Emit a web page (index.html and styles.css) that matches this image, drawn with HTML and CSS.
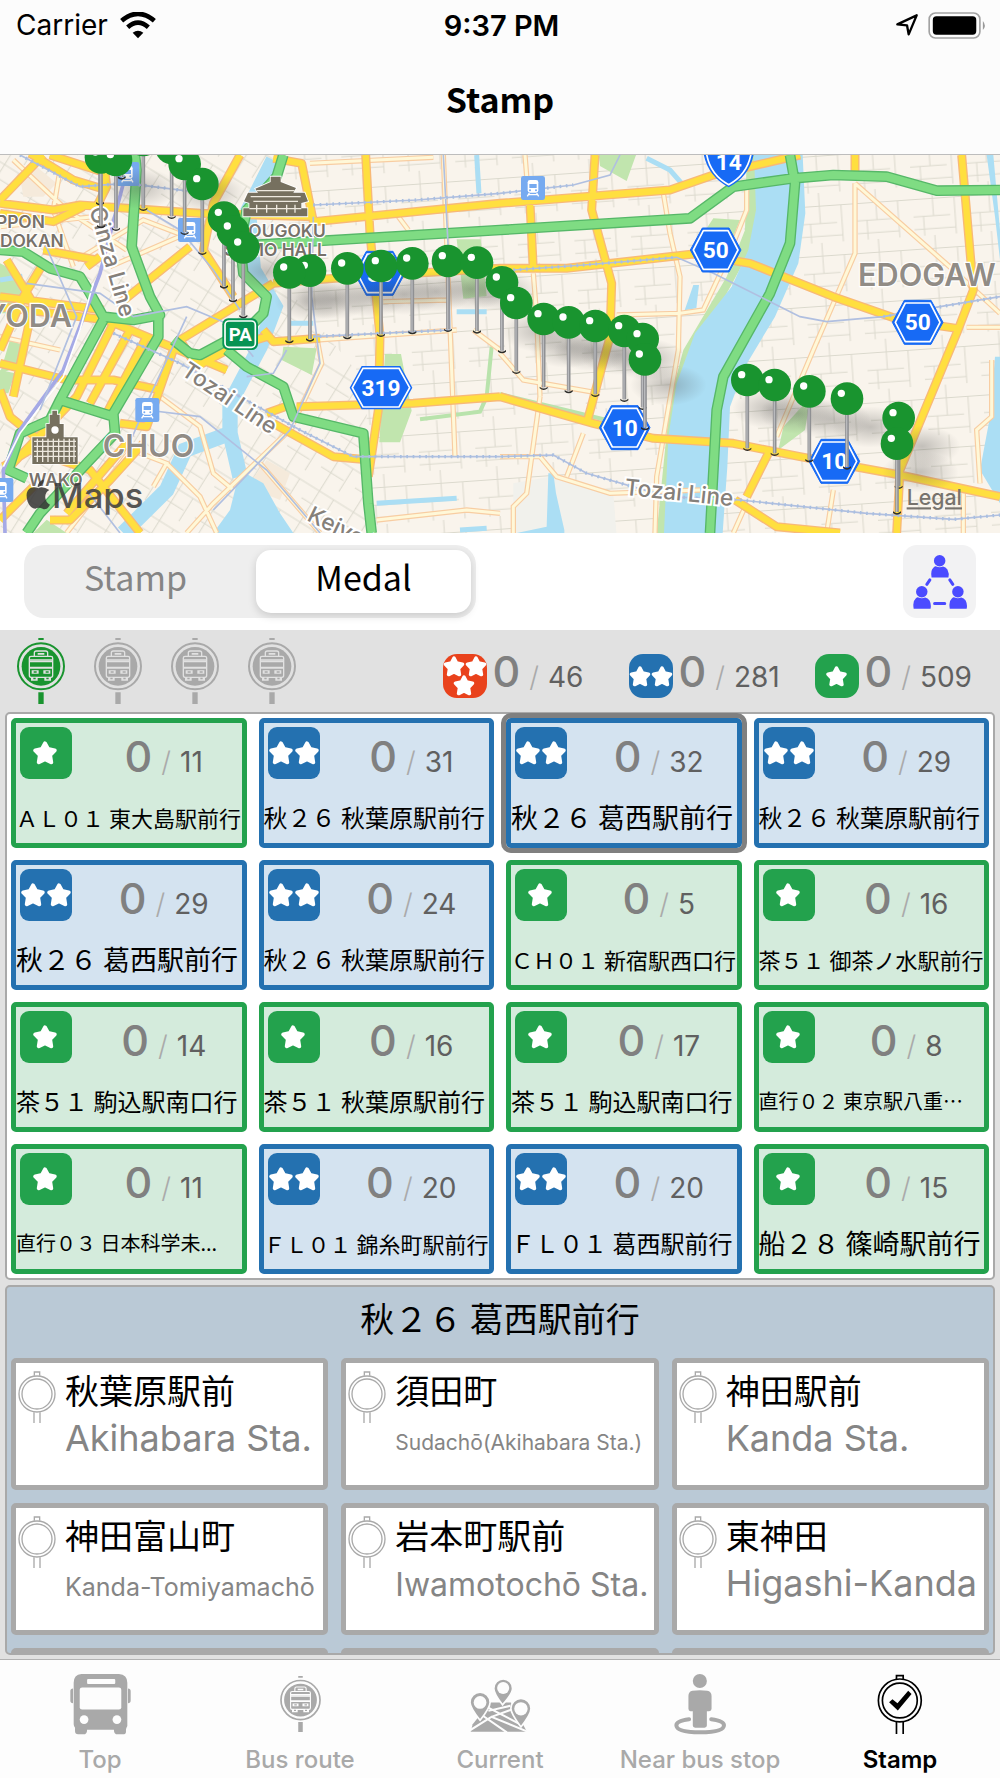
FILE: index.html
```html
<!DOCTYPE html>
<html lang="ja">
<head>
<meta charset="utf-8">
<meta name="viewport" content="width=device-width, initial-scale=1">
<title>Stamp</title>
<link rel="stylesheet" href="styles.css">
</head>
<body>
<svg class="defs" aria-hidden="true">
  <symbol id="star" viewBox="0 0 24 24"><path d="M12 2.4 15 8 21.7 9.4 17.1 14.2 18.2 21.2 12 18.2 5.8 21.2 6.9 14.2 2.3 9.4 9 8Z" fill="#fff" stroke="#fff" stroke-width="4" stroke-linejoin="round"/></symbol>
  <symbol id="one" viewBox="0 0 52 52"><rect width="52" height="52" rx="9" fill="#23a24d"/><use href="#star" x="13" y="14" width="24" height="24"/></symbol>
  <symbol id="two" viewBox="0 0 52 52"><rect width="52" height="52" rx="9" fill="#2471b0"/><use href="#star" x="1" y="14" width="24" height="24"/><use href="#star" x="27" y="14" width="24" height="24"/></symbol>
  <symbol id="sum1" viewBox="0 0 44 44"><rect width="44" height="44" rx="14" fill="#23a24d"/><use href="#star" x="11" y="12" width="21" height="21"/></symbol>
  <symbol id="sum2" viewBox="0 0 44 44"><rect width="44" height="44" rx="14" fill="#2471b0"/><use href="#star" x="0" y="12" width="22" height="21"/><use href="#star" x="22" y="12" width="22" height="21"/></symbol>
  <symbol id="sum3" viewBox="0 0 44 44"><rect width="44" height="44" rx="14" fill="#e9421c"/><use href="#star" x="0" y="2" width="22" height="21"/><use href="#star" x="22" y="2" width="22" height="21"/><use href="#star" x="10" y="21" width="22" height="21"/></symbol>
  <symbol id="sign" viewBox="0 0 144 198">
    <path d="M64 0h16v6h-16zM64 163h16v35h-16z" fill="currentColor"/>
    <circle cx="72" cy="85" r="69" fill="none" stroke="currentColor" stroke-width="6"/>
    <circle cx="72" cy="85" r="58" fill="currentColor"/>
    <g fill="none" stroke="var(--cut)" stroke-width="4"><path d="M52 54v-9q0-6 6-6h28q6 0 6 6v9M42 55h60q5 0 5 5v52q0 6-5 6H42q-5 0-5-6V60q0-5 5-5ZM39 66h66M39 90h66"/></g>
    <path d="M62 45h20v5H62zM38 68h68v5H38zM38 86h68v4H38z" fill="var(--cut)"/>
    <path d="M44 97h21v10H44zM79 97h21v10H79zM42 119h20v9H42zM82 119h20v9H82z" fill="var(--cut)"/>
    <path d="M50 100h9v4h-9zM86 100h9v4h-9zM49 119h7v5h-7zM88 119h7v5h-7z" fill="currentColor"/>
  </symbol>
  <symbol id="stop" viewBox="0 0 112 156">
    <g fill="none" stroke="currentColor"><circle cx="56" cy="69" r="54" stroke-width="4"/><circle cx="56" cy="69" r="45" stroke-width="4"/><path d="M48 14V3h16v11M47 124v32M65 124v32" stroke-width="4"/></g>
  </symbol>
  <g id="pin"><path d="M0 40V205" stroke="#8f9093" stroke-width="11"/><path d="M-1 40V205" stroke="#b9babd" stroke-width="4"/><path d="M-12 203q12 11 24 0v5q-12 10-24 0Z" fill="#2c2c2a"/><circle r="49" fill="#19942f"/><circle cx="-17" cy="-16" r="11" fill="#fff"/></g>
  <g id="train"><rect width="72" height="72" rx="7" fill="#76aaf0"/><rect x="20" y="12" width="32" height="38" rx="7" fill="#fff"/><path d="M25 24h22v12H25z" fill="#76aaf0"/><circle cx="27" cy="43" r="3" fill="#76aaf0"/><circle cx="45" cy="43" r="3" fill="#76aaf0"/><path d="m25 51-6 10M47 51l6 10M23 56h26" stroke="#fff" stroke-width="4"/></g>
  <g id="hex"><path d="M-40-66H40L76 0 40 66H-40L-76 0Z" fill="#176af5" stroke="#176af5" stroke-width="3" stroke-linejoin="round"/><path d="M-37-58H37L67 0 37 58H-37L-67 0Z" fill="#176af5" stroke="#fff" stroke-width="5" stroke-linejoin="round"/></g>
</svg>

<div class="app">
  <header class="top">
    <div class="status">
      <span class="carrier">Carrier
        <svg class="wifi" viewBox="0 0 108 80" aria-hidden="true"><path d="M5 26Q54-16 103 26M23 45Q54 18 85 45" fill="none" stroke="#000" stroke-width="14"/><path d="M38 62Q54 50 70 62L54 78Z"/></svg>
      </span>
      <time class="clock">9:37 PM</time>
      <span class="indicators">
        <svg class="arrow" viewBox="0 0 66 66" aria-hidden="true"><path d="M4 31 62 4 38 61 33 34Z" fill="none" stroke="#000" stroke-width="7" stroke-linejoin="round"/></svg>
        <svg class="battery" viewBox="0 0 176 82" aria-hidden="true"><rect x="2" y="3" width="154" height="76" rx="19" fill="none" stroke="#a2a2a2" stroke-width="5"/><rect x="13" y="13" width="132" height="56" rx="11"/><path d="M165 27q12 14 0 28z" fill="#999"/></svg>
      </span>
    </div>
    <h1>Stamp</h1>
  </header>

  <svg class="map" viewBox="0 15 3000 1134" preserveAspectRatio="xMidYMid slice" role="img" aria-label="Map">
    <defs>
      <pattern id="st1" width="170" height="150" patternUnits="userSpaceOnUse" patternTransform="rotate(-4)"><path d="M0 40H170M0 92H110M60 0V92M125 40V150M0 130H125M30 92V150" fill="none" stroke="#dbd9cd" stroke-width="3"/></pattern>
      <pattern id="st2" width="120" height="110" patternUnits="userSpaceOnUse" patternTransform="rotate(32)"><path d="M0 30H120M0 75H80M35 0V110M85 30V110" fill="none" stroke="#dbd9cd" stroke-width="3"/></pattern>
      <radialGradient id="shade"><stop offset="0" stop-color="#444" stop-opacity=".3"/><stop offset="1" stop-color="#444" stop-opacity="0"/></radialGradient>
      <ellipse id="sh" cx="70" cy="85" rx="115" ry="62" fill="url(#shade)"/>
    </defs>
    <rect width="3000" height="1160" fill="#f9f4ec"/>
    <path d="M850 0H3000V1160H1100V700L850 400Z" fill="url(#st1)"/>
    <path d="M0 0H850V400L1100 700V1160H0Z" fill="url(#st2)"/>
    <path d="M1650 980 1840 1030 1850 1160H1540V1000Z" fill="#f1f1ec"/>
    <g fill="#f5eadb"><path d="m60 80 50-30 60 50-40 40H70ZM800 930l70 40-30 80-100-40Z"/></g>
    <g fill="#c1e5ae">
      <path d="M0 340 60 370 75 440 50 490H0ZM30 570l50 20-20 60-60 20ZM0 660l45 10-20 60H0ZM850 590l100 5-15 80-90-45ZM1155 612h48l32 170-35 95h-62ZM1370 268h72l18 170-70 8ZM1796 15h112l-28 78-80-45ZM2140 205l80 5-20 50-90-10ZM2350 830l60-65 15 15-10 60-80 60ZM100 1149l40-40 60 40Z"/>
      <path d="M2240 15h40V200L2240 320 2120 540 2035 700 2010 1149H1970L2010 750 2050 600 2180 380 2235 240Z"/>
    </g>
    <path d="M1260 808 1440 785 1460 740 1475 590M1500 732 1820 810" fill="none" stroke="#b9e3ac" stroke-width="12"/>
    <g fill="#abdef4">
      <path d="M2262 15H2408L2416 190 2395 340 2325 500 2235 650 2190 770 2182 950 2168 1149H1992L2005 860 2030 700 2085 550 2195 410 2245 300 2268 180Z"/>
      <path d="M2960 15h20L3000 240V330L2985 200ZM2985 620H3000V1060L2940 960 2970 800ZM720 960 790 1000 840 1090 880 1149H640L690 1080ZM1645 970h15l8 60 25 110V1149H1550L1640 1130ZM2080 405h17l-8 70-35 6Z"/>
    </g>
    <g fill="none" stroke="#abdef4"><path d="M820 30 745 180 760 360 825 470 780 590 690 760 690 850 720 980" stroke-width="46"/><path d="M690 850 555 900 500 1020 370 1149" stroke-width="46"/><path d="M870 520H940M1370 485H1460M1130 1060 1370 1045M1940 25 2010 60 2045 100M1430 15 1437 130M1380 1140 1460 1135M0 390 60 380 70 440" stroke-width="15"/></g>

    <path d="M40 30 200 180 380 300M180 60l-20 120 60 170M0 230 280 200M230 330 430 210 560 260M330 350 560 250M0 560 180 600M930 40 1300 22M1330 15 1345 400 1365 920M1150 455 1345 450M1195 200 1225 240M1575 15 1585 140M1600 370 1610 500 1620 740M1850 495 2040 490 2110 480 2180 330 2240 180V100M1990 130 2010 250 2040 380 2035 600 1970 980 1965 1149M2565 100V310L2440 600 2330 860M2565 100 2860 360 3000 490M2900 532H3000M2975 630V800L2930 840 2940 1000M1500 610 1570 690 1800 730M1500 920H1620L1670 980 1830 1030 2100 1020M1620 740 1580 1030 1540 1070V1149M1750 850 1700 980M880 830 640 1060 560 1149M480 740 600 830 640 970 700 1020M500 940 600 1040 650 1149M780 940 960 1149M370 890 500 940 460 1010M200 1149 400 890M1130 1110 1400 1080 1500 1090M950 560 965 640 880 820M1420 540 1500 600M950 570 1370 540M2890 1030V1149M2500 1020 2480 1149M2200 1149 2240 1060" fill="none" stroke="#f8cda2" stroke-width="16"/>
    <path d="M40 30 200 180 380 300M180 60l-20 120 60 170M0 230 280 200M230 330 430 210 560 260M330 350 560 250M0 560 180 600M930 40 1300 22M1330 15 1345 400 1365 920M1150 455 1345 450M1195 200 1225 240M1575 15 1585 140M1600 370 1610 500 1620 740M1850 495 2040 490 2110 480 2180 330 2240 180V100M1990 130 2010 250 2040 380 2035 600 1970 980 1965 1149M2565 100V310L2440 600 2330 860M2565 100 2860 360 3000 490M2900 532H3000M2975 630V800L2930 840 2940 1000M1500 610 1570 690 1800 730M1500 920H1620L1670 980 1830 1030 2100 1020M1620 740 1580 1030 1540 1070V1149M1750 850 1700 980M880 830 640 1060 560 1149M480 740 600 830 640 970 700 1020M500 940 600 1040 650 1149M780 940 960 1149M370 890 500 940 460 1010M200 1149 400 890M1130 1110 1400 1080 1500 1090M950 560 965 640 880 820M1420 540 1500 600M950 570 1370 540M2890 1030V1149M2500 1020 2480 1149M2200 1149 2240 1060" fill="none" stroke="#fff8d8" stroke-width="9"/>

    <g fill="none" stroke="#f8b977" stroke-width="27" stroke-linejoin="round"><path d="M90 10 220 90 320 120M150 15 320 70M310 20 320 110 290 170M720 15 640 160 610 300 700 440M0 160 160 180 240 165 600 190 940 200M0 190 160 215 250 170M820 25 905 40 940 215 1500 160 2010 120 2140 75 2400 15M1097 15 1110 250 1140 560 1135 780 1105 980M1785 15 1775 180 1835 400 1830 560 1760 820M1590 160 1600 360M820 400 1060 380 1500 355 1700 355 2080 312 2250 340 2500 440 2700 510 2870 535M2565 15V70M2885 15 2920 420 2870 550 2700 960 2690 1149M890 770 1240 760 1500 740M1500 740 1780 820 1960 865 2200 880 2400 920 2700 975 3000 1040M0 720 30 800 180 920M0 640 200 690 340 690 480 720M540 570 820 400M540 570 590 650 700 590 800 560M790 540 820 575 960 565M0 470 320 510 440 560 680 660M310 480 0 440M340 520 230 740 20 960M390 540 270 760M440 560 320 790M520 600 440 830 360 820M800 790 870 765M820 820 1000 920 1110 930M0 600 70 440 130 340M130 15 0 150M130 300 290 330M20 330 100 460 40 740M260 350 300 320M360 460 570 290M10 950 90 900 270 960 420 1149M150 1110 210 1110 330 990 430 880M0 1110 100 1010M200 1090 380 880M2205 1050 2330 1130 2520 1149M2240 1040 2310 900"/></g>
    <path d="M90 10 220 90 320 120M150 15 320 70M310 20 320 110 290 170M720 15 640 160 610 300 700 440M0 160 160 180 240 165 600 190 940 200M0 190 160 215 250 170M820 25 905 40 940 215 1500 160 2010 120 2140 75 2400 15M1097 15 1110 250 1140 560 1135 780 1105 980M1785 15 1775 180 1835 400 1830 560 1760 820M1590 160 1600 360M820 400 1060 380 1500 355 1700 355 2080 312 2250 340 2500 440 2700 510 2870 535M2565 15V70M2885 15 2920 420 2870 550 2700 960 2690 1149M890 770 1240 760 1500 740 1780 820 1960 865 2200 880 2400 920 2700 975 3000 1040M0 720 30 800 180 920M0 640 200 690 340 690 480 720M540 570 820 400M540 570 590 650 700 590 800 560M790 540 820 575 960 565M0 470 320 510 440 560 680 660M310 480 0 440M340 520 230 740 20 960M390 540 270 760M440 560 320 790M520 600 440 830 360 820M800 790 870 765M820 820 1000 920 1110 930M0 600 70 440 130 340M130 15 0 150M130 300 290 330M20 330 100 460 40 740M260 350 300 320M360 460 570 290M10 950 90 900 270 960 420 1149M150 1110 210 1110 330 990 430 880M0 1110 100 1010M200 1090 380 880M2205 1050 2330 1130 2520 1149M2240 1040 2310 900" fill="none" stroke="#ffdf3f" stroke-width="19" stroke-linejoin="round"/>

    <g fill="none" stroke="#56b768" stroke-width="32" stroke-linejoin="round"><path d="M0 300 70 305 150 355 240 380 270 430 310 500 400 510 480 495 450 440 395 290 410 60 405 15M850 15 830 80 740 180 720 280 730 370 800 440 790 490 740 540 600 615 570 610 520 570M475 500 475 560 340 790 345 850 260 940 120 1090 80 1149M310 510 180 750 340 800M180 750 150 810 60 850 25 960 80 985M680 600 740 650 850 710 880 800 1090 850 1105 1060 1115 1149M760 285 1500 240 2070 205 2200 110 2380 85 2500 75 2660 80 2810 122 3000 120M2370 15 2385 100 2370 280 2310 430 2170 680 2150 780 2130 1149"/></g>
    <path d="M0 300 70 305 150 355 240 380 270 430 310 500 400 510 480 495 450 440 395 290 410 60 405 15M850 15 830 80 740 180 720 280 730 370 800 440 790 490 740 540 600 615 570 610 520 570M475 500 475 560 340 790 345 850 260 940 120 1090 80 1149M310 510 180 750 340 800M180 750 150 810 60 850 25 960 80 985M680 600 740 650 850 710 880 800 1090 850 1105 1060 1115 1149M760 285 1500 240 2070 205 2200 110 2380 85 2500 75 2660 80 2810 122 3000 120M2370 15 2385 100 2370 280 2310 430 2170 680 2150 780 2130 1149" fill="none" stroke="#7fdc83" stroke-width="24" stroke-linejoin="round"/>

    <path d="M370 100 300 370 190 660 60 840 10 960 15 1149" fill="none" stroke="#a5a9e6" stroke-width="11"/>
    <path d="M280 400 240 540 190 680 60 850 10 950" fill="none" stroke="#fff" stroke-width="5"/>
    <path d="M60 15 240 110 380 100 620 130M940 165 1250 150 1500 130 1720 105 1830 75 1860 15M130 270 230 500 120 780M80 400 300 430 400 500 560 470 680 520 760 620M440 180 540 240 640 360 720 480M340 550 540 640 900 840 1060 920 1500 920 1660 915 1760 970 2000 1040 2220 1050 2600 1090 2860 1108 3000 1095M940 560 1350 540 1345 300 1330 15M440 780 600 800 800 960 960 1149M380 900 440 760 560 500M860 600 820 670 740 680M940 200 935 440 960 640 870 840 640 1080M260 1020 360 1149M1540 360 1750 345 2030 322 2140 370 2300 450 2400 500 2480 515 2650 500 2820 470 3000 440" fill="none" stroke="#b0bfe0" stroke-width="5"/>
    <path d="M60 15 240 110 380 100 620 130M940 165 1250 150 1500 130 1720 105M340 550 540 640 900 840 1060 920 1500 920 1660 915 1760 970 2000 1040 2220 1050 2600 1090 2860 1108 3000 1095M940 560 1350 540M1540 360 1750 345 2030 322M2650 500 3000 440" fill="none" stroke="#a9bfe0" stroke-width="10" stroke-dasharray="5 14"/>

    <g class="place"><text x="-12" y="233" class="poi">PPON</text><text x="0" y="290" class="poi">DOKAN</text><text x="745" y="260" class="poi">OUGOKU</text><text x="672" y="318" class="poi">SUMO HALL</text><text x="86" y="1008" class="poi">WAKO</text>
      <text x="-46" y="532" class="ward">YODA</text><text x="308" y="920" class="ward">CHUO</text><text x="2574" y="408" class="ward">EDOGAW</text></g>
    <g class="line"><text transform="translate(268 178) rotate(74)">Ginza Line</text><text transform="translate(540 672) rotate(34)">Tozai Line</text><text transform="translate(1872 1034) rotate(6)">Tozai Line</text><text transform="translate(918 1110) rotate(26)">Keiyo Line</text></g>
    <use href="#train" x="346" y="36"/><use href="#train" x="534" y="204"/><use href="#train" x="406" y="744"/><use href="#train" x="-32" y="984"/><use href="#train" x="1563" y="78"/>
    <g stroke="#fff" stroke-width="5" fill="#76705f" paint-order="stroke"><path d="M812 80h30v16l46 18-8 14h34l10 26-20 5v16h18v24H730v-24h18v-16l-16-5 12-26h30l-8-12 46-20Z"/><path d="M97 942V862h42v-40h10V794h8v-12h14v12h8v28h12v40h42v80Z"/></g>
    <path d="M770 122H884M752 140H902M760 154H894M748 176H904M770 188V164M800 188V164M830 188V164M860 188V164M885 188V164M102 874H228M102 889H228M102 904H228M102 919H228M112 866V936M128 866V936M144 866V936M160 866V936M176 866V936M192 866V936M208 866V936M222 866V936" stroke="#eee9df" stroke-width="4" fill="none"/><circle cx="165" cy="840" r="11" fill="#fff"/>
    <rect x="667" y="505" width="107" height="95" rx="18" fill="#079353"/><rect x="675" y="513" width="91" height="79" rx="12" fill="none" stroke="#fff" stroke-width="5"/><text x="721" y="572" class="pa">PA</text>
    <use href="#hex" x="1139" y="370"/>
    <path d="M1085 648H1201L1237 713 1201 778H1085L1049 713Z" fill="#176af5"/><path d="M1089 655H1197L1229 713 1197 771H1089L1057 713Z" fill="none" stroke="#fff" stroke-width="5"/>
    <use href="#hex" x="2147" y="300"/><use href="#hex" x="2753" y="517"/><use href="#hex" x="1874" y="833"/><use href="#hex" x="2503" y="934"/>
    <path d="M2109 0H2263Q2255 75 2186 112 2118 75 2109 0Z" fill="#176af5"/><path d="M2118 0Q2126 72 2186 104 2246 72 2255 0" fill="none" stroke="#fff" stroke-width="5"/>
    <g class="shield"><text x="1139" y="395">50</text><text x="1143" y="738">319</text><text x="2147" y="324">50</text><text x="2753" y="541">50</text><text x="1874" y="857">10</text><text x="2503" y="958">10</text><text x="2186" y="60">14</text></g>
    <g><use href="#sh" x="348" y="30"/><use href="#sh" x="554" y="42"/><use href="#sh" x="730" y="280"/><use href="#sh" x="868" y="367"/><use href="#sh" x="930" y="362"/><use href="#sh" x="1042" y="355"/><use href="#sh" x="1143" y="348"/><use href="#sh" x="1237" y="340"/><use href="#sh" x="1344" y="333"/><use href="#sh" x="1431" y="338"/><use href="#sh" x="1549" y="459"/><use href="#sh" x="1631" y="507"/><use href="#sh" x="1706" y="517"/><use href="#sh" x="1786" y="528"/><use href="#sh" x="1873" y="543"/><use href="#sh" x="1935" y="620"/><use href="#sh" x="2242" y="690"/><use href="#sh" x="2324" y="705"/><use href="#sh" x="2428" y="724"/><use href="#sh" x="2541" y="746"/><use href="#sh" x="2696" y="804"/><use href="#sh" x="2691" y="881"/></g>
    <g><use href="#pin" x="300" y="-47"/><use href="#pin" x="365" y="-124"/><use href="#pin" x="430" y="-30"/><use href="#pin" x="303" y="22"/><use href="#pin" x="348" y="30"/><use href="#pin" x="515" y="-6"/><use href="#pin" x="554" y="42"/><use href="#pin" x="607" y="102"/><use href="#pin" x="672" y="203"/><use href="#pin" x="699" y="244"/><use href="#pin" x="730" y="292"/><use href="#pin" x="930" y="362"/><use href="#pin" x="868" y="367"/><use href="#pin" x="1042" y="355"/><use href="#pin" x="1143" y="348"/><use href="#pin" x="1237" y="340"/><use href="#pin" x="1344" y="333"/><use href="#pin" x="1431" y="338"/><use href="#pin" x="1506" y="397"/><use href="#pin" x="1549" y="459"/><use href="#pin" x="1631" y="507"/><use href="#pin" x="1706" y="517"/><use href="#pin" x="1786" y="528"/><use href="#pin" x="1873" y="543"/><use href="#pin" x="1928" y="567"/><use href="#pin" x="1935" y="628"/><use href="#pin" x="2242" y="690"/><use href="#pin" x="2324" y="705"/><use href="#pin" x="2428" y="724"/><use href="#pin" x="2541" y="746"/><use href="#pin" x="2696" y="804"/><use href="#pin" x="2691" y="881"/></g>
    <path d="M148 1020q-14 8-12 24 2 14 14 20-10 18-22 12-12-6-22 0-14 0-23-21-10-32 10-42 12-4 22 2 12-8 33 5ZM131 988q2 16-18 24 0-16 18-24Z" fill="#333" opacity=".85"/>
    <text x="156" y="1073" class="maps">Maps</text>
    <a href="#legal"><text x="2720" y="1066" class="legal">Legal</text></a>
  </svg>

  <div class="controls">
    <div class="segmented" role="radiogroup" aria-label="View">
      <label><input type="radio" name="view"><span>Stamp</span></label>
      <label><input type="radio" name="view" checked><span>Medal</span></label>
    </div>
    <button class="share" aria-label="Share">
      <svg viewBox="0 0 160 160" aria-hidden="true"><g fill="#4b4bff"><g id="person"><circle cx="79" cy="17" r="17"/><path d="M61 37q5-5 8-3 10 4 20 0 8 1 13 9 6 12 3 24H55q-4-22 6-30Z"/></g><use href="#person" x="-53" y="92"/><use href="#person" x="54" y="92"/></g><path d="M50 74 41 87M109 74l9 13M64 144H94" stroke="#4b4bff" stroke-width="9" stroke-linecap="round"/></svg>
    </button>
  </div>

  <main>
    <div class="summary">
      <div class="signs">
        <button class="on" aria-label="Operator 1"><svg><use href="#sign"/></svg></button>
        <button aria-label="Operator 2"><svg><use href="#sign"/></svg></button>
        <button aria-label="Operator 3"><svg><use href="#sign"/></svg></button>
        <button aria-label="Operator 4"><svg><use href="#sign"/></svg></button>
      </div>
      <div class="totals">
        <div class="total"><svg><use href="#sum3"/></svg><span class="count"><b>0</b><i>/</i><span>46</span></span></div>
        <div class="total"><svg><use href="#sum2"/></svg><span class="count"><b>0</b><i>/</i><span>281</span></span></div>
        <div class="total"><svg><use href="#sum1"/></svg><span class="count"><b>0</b><i>/</i><span>509</span></span></div>
      </div>
    </div>

    <section class="routes">
      <button class="route green"><svg><use href="#one"/></svg><span class="count"><b>0</b><i>/</i><span>11</span></span><span class="name small">ＡＬ０１ 東大島駅前行</span></button>
      <button class="route"><svg><use href="#two"/></svg><span class="count"><b>0</b><i>/</i><span>31</span></span><span class="name">秋２６ 秋葉原駅前行</span></button>
      <button class="route selected"><svg><use href="#two"/></svg><span class="count"><b>0</b><i>/</i><span>32</span></span><span class="name large">秋２６ 葛西駅前行</span></button>
      <button class="route"><svg><use href="#two"/></svg><span class="count"><b>0</b><i>/</i><span>29</span></span><span class="name">秋２６ 秋葉原駅前行</span></button>
      <button class="route"><svg><use href="#two"/></svg><span class="count"><b>0</b><i>/</i><span>29</span></span><span class="name large">秋２６ 葛西駅前行</span></button>
      <button class="route"><svg><use href="#two"/></svg><span class="count"><b>0</b><i>/</i><span>24</span></span><span class="name">秋２６ 秋葉原駅前行</span></button>
      <button class="route green"><svg><use href="#one"/></svg><span class="count"><b>0</b><i>/</i><span>5</span></span><span class="name small">ＣＨ０１ 新宿駅西口行</span></button>
      <button class="route green"><svg><use href="#one"/></svg><span class="count"><b>0</b><i>/</i><span>16</span></span><span class="name small">茶５１ 御茶ノ水駅前行</span></button>
      <button class="route green"><svg><use href="#one"/></svg><span class="count"><b>0</b><i>/</i><span>14</span></span><span class="name">茶５１ 駒込駅南口行</span></button>
      <button class="route green"><svg><use href="#one"/></svg><span class="count"><b>0</b><i>/</i><span>16</span></span><span class="name">茶５１ 秋葉原駅前行</span></button>
      <button class="route green"><svg><use href="#one"/></svg><span class="count"><b>0</b><i>/</i><span>17</span></span><span class="name">茶５１ 駒込駅南口行</span></button>
      <button class="route green"><svg><use href="#one"/></svg><span class="count"><b>0</b><i>/</i><span>8</span></span><span class="name tiny">直行０２ 東京駅八重…</span></button>
      <button class="route green"><svg><use href="#one"/></svg><span class="count"><b>0</b><i>/</i><span>11</span></span><span class="name tiny">直行０３ 日本科学未...</span></button>
      <button class="route"><svg><use href="#two"/></svg><span class="count"><b>0</b><i>/</i><span>20</span></span><span class="name small">ＦＬ０１ 錦糸町駅前行</span></button>
      <button class="route"><svg><use href="#two"/></svg><span class="count"><b>0</b><i>/</i><span>20</span></span><span class="name">ＦＬ０１ 葛西駅前行</span></button>
      <button class="route green"><svg><use href="#one"/></svg><span class="count"><b>0</b><i>/</i><span>15</span></span><span class="name large">船２８ 篠崎駅前行</span></button>
    </section>

    <section class="stops">
      <h2>秋２６ 葛西駅前行</h2>
      <div class="stop-grid">
        <button class="stop"><svg><use href="#stop"/></svg><span class="ja">秋葉原駅前</span><span class="en">Akihabara Sta.</span></button>
        <button class="stop"><svg><use href="#stop"/></svg><span class="ja">須田町</span><span class="en tiny">Sudachō(Akihabara Sta.)</span></button>
        <button class="stop"><svg><use href="#stop"/></svg><span class="ja">神田駅前</span><span class="en">Kanda Sta.</span></button>
        <button class="stop"><svg><use href="#stop"/></svg><span class="ja">神田富山町</span><span class="en small">Kanda-Tomiyamachō</span></button>
        <button class="stop"><svg><use href="#stop"/></svg><span class="ja">岩本町駅前</span><span class="en medium">Iwamotochō Sta.</span></button>
        <button class="stop"><svg><use href="#stop"/></svg><span class="ja">東神田</span><span class="en">Higashi-Kanda</span></button>
        <div class="stop" aria-hidden="true"></div><div class="stop" aria-hidden="true"></div><div class="stop" aria-hidden="true"></div>
      </div>
    </section>
  </main>

  <nav class="tabs">
    <a href="#top"><svg viewBox="0 0 182 182" aria-hidden="true"><path d="M34 0H146Q171 2 171 26V155Q168 160 167 165V172Q167 180 158 180H142Q131 180 131 166H51Q51 180 40 180H24Q15 180 15 171V160Q11 155 11 150V26Q11 2 34 0Z" fill="currentColor"/><path d="M9 43V87Q1 87 1 79V51Q1 43 9 43ZM173 43V87Q181 87 181 79V51Q181 43 173 43Z" fill="currentColor"/><rect x="51" y="15" width="84" height="15" rx="3" fill="#fdfdfd"/><rect x="29" y="40" width="124" height="66" rx="7" fill="#fdfdfd"/><circle cx="42" cy="136" r="13" fill="#fdfdfd"/><circle cx="140" cy="136" r="13" fill="#fdfdfd"/></svg><span>Top</span></a>
    <a href="#route"><svg class="mini" aria-hidden="true"><use href="#sign"/></svg><span>Bus route</span></a>
    <a href="#current"><svg viewBox="0 0 182 182" aria-hidden="true"><path d="M8 150 60 85H122L170 172H2Z" fill="currentColor"/><path d="M0 168 64 128 182 176M20 112 110 174M50 98 150 150M55 110 120 95M64 128 130 104" fill="none" stroke="#fdfdfd" stroke-width="6"/><g fill="currentColor" stroke="#fdfdfd" stroke-width="5"><path d="M30 138Q0 100 0 84A29 29 0 0 1 60 84Q60 100 30 138Z"/><path d="M97 92Q71 58 71 43A27 27 0 0 1 127 43Q127 58 97 92Z"/><path d="M152 158Q122 118 122 103A30 30 0 0 1 182 103Q182 120 152 158Z"/></g><g fill="#fdfdfd"><circle cx="30" cy="85" r="19"/><circle cx="99" cy="42" r="18"/><circle cx="152" cy="104" r="20"/></g></svg><span>Current</span></a>
    <a href="#near"><svg viewBox="0 0 182 182" aria-hidden="true"><g fill="currentColor"><circle cx="89" cy="21" r="21"/><path d="M67 50Q89 47 111 50 124 52 124 66V104Q124 111 117 111H110V154Q110 160 103 160H75Q68 160 68 154V111H61Q55 111 55 104V66Q55 52 67 50Z"/></g><path d="M57 135Q19 140 19 153 19 174 90 174T161 153Q161 140 123 135" fill="none" stroke="currentColor" stroke-width="12" stroke-linecap="round"/></svg><span>Near bus stop</span></a>
    <a href="#stamp" class="current"><svg viewBox="0 0 182 182" aria-hidden="true"><g fill="none" stroke="currentColor" stroke-width="5"><circle cx="89" cy="79" r="64"/><circle cx="89" cy="79" r="52"/><path d="M79 16V5H99V16M79 142V179M99 142V179"/></g><path d="M57 84 67 75 82 87 114 50 124 60 83 109Z" fill="currentColor"/></svg><span>Stamp</span></a>
  </nav>
</div>
</body>
</html>
```
FILE: styles.css
```css
* { box-sizing: border-box; }

:root {
  --ui: Inter, "Liberation Sans", sans-serif;
  --jp: "Noto Sans CJK JP", "Noto Sans", sans-serif;
  --line: #a9a9a9;
}

body { margin: 0; background: #fff; color: #000; font-family: var(--ui); }
button { margin: 0; padding: 0; border: 0; background: none; color: inherit; font: inherit; text-align: left; }
.defs { position: absolute; width: 0; height: 0; }

.app { display: flex; flex-direction: column; height: 100vh; min-height: 1400px; }

.top { flex: none; height: 155px; background: #fcfcfc; border-bottom: 1px solid #bdbdbd; }
.status { display: grid; grid-template-columns: 1fr auto 1fr; align-items: center; height: 50px; padding: 0 13px 0 16px; font-size: 28px; }
.carrier { display: flex; align-items: center; gap: 12px; }
.wifi { width: 36px; height: 27px; }
.clock { font-size: 29px; font-weight: 600; }
.indicators { display: flex; align-items: center; justify-content: flex-end; gap: 10px; }
.arrow { width: 22px; height: 22px; }
.battery { width: 59px; height: 27px; }
h1 { margin: 0; font: 700 34px/98px var(--jp); text-align: center; }

.map { display: block; flex: none; width: 100%; height: 378px; }
.place text { fill: #85807a; font-family: var(--ui); stroke: #fff; stroke-width: 7px; paint-order: stroke; }
.place .poi { font-size: 52px; font-weight: 600; fill: #77716a; }
.place .ward { font-size: 92px; font-weight: 600; fill: #918c86; }
.line { font: 500 68px var(--ui); fill: #85807a; stroke: #fff; stroke-width: 12px; paint-order: stroke; }
.pa { font: 700 56px Roboto, sans-serif; fill: #fff; text-anchor: middle; }
.shield { font: 700 68px Roboto, sans-serif; fill: #fff; text-anchor: middle; }
.maps { font: 500 104px var(--ui); fill: #3b3b3b; opacity: .85; }
.legal { font: 500 64px var(--ui); fill: #77736d; text-decoration: underline; }

.controls { display: flex; flex: none; align-items: center; justify-content: space-between; height: 97px; padding: 0 24px; background: #fff; }
.segmented { display: grid; grid-template-columns: 1fr 1fr; width: 452px; height: 73px; padding: 5px; border-radius: 20px; background: #eee; }
.segmented label { display: flex; }
.segmented input { position: absolute; opacity: 0; }
.segmented span { flex: 1; margin-left: 6px; border-radius: 15px; color: #858585; font: 400 34px/54px var(--jp); text-align: center; }
.segmented label:first-child span { margin: 0 8px 0 0; }
.segmented input:checked + span { background: #fff; color: #000; box-shadow: 0 3px 8px rgba(0, 0, 0, .15); }
.share { display: grid; place-items: center; width: 73px; height: 73px; border-radius: 14px; background: #f2f2f3; }
.share svg { width: 54px; height: 54px; }

main { display: flex; flex: 1; flex-direction: column; min-height: 0; padding: 0 5px 4px; background: #e1e1e1; }

.summary { display: flex; flex: none; justify-content: space-between; height: 82px; padding: 8px 23px 0 12px; }
.signs { display: flex; gap: 29px; }
.signs button { height: 66px; color: #a9a9a9; --cut: #e1e1e1; }
.signs .on { color: #19942f; }
.signs svg { display: block; width: 48px; height: 66px; }
.totals { display: flex; }
.total { display: flex; width: 186px; height: 76px; align-items: center; }
.total:last-child { width: auto; }
.total svg { width: 44px; height: 44px; }
.total .count { padding: 0 0 5px 5px; }

.count { display: flex; align-items: baseline; gap: 9px; color: #606060; font-size: 28px; line-height: 44px; white-space: nowrap; }
.count b { color: #808080; font-size: 43px; font-weight: 500; }
.count i { color: #aaa; font-style: normal; font-weight: 300; }

.routes { display: grid; flex: none; grid-template-columns: repeat(4, 1fr); gap: 12px; padding: 4px 4px; border: 2px solid var(--line); border-radius: 5px; background: #fff; }
.route { display: grid; grid-template-columns: 52px 1fr; grid-template-rows: 67px 46px; height: 130px; padding: 4px 0 0; border: 5px solid #2471b0; border-radius: 5px; background: #d4e3f0; }
.route.green { border-color: #23a24d; background: #d4ebdc; }
.route.selected { outline: 5px solid #808080; outline-offset: 0; }
.route svg { width: 52px; height: 52px; margin-left: 4px; }
.route .count { justify-content: center; padding: 7px 0 0 18px; }
.name { grid-column: 1 / 3; align-self: center; font: 400 24px/40px var(--jp); white-space: nowrap; }
.name.large { font-size: 27px; }
.name.small { font-size: 22px; }
.name.tiny { font-size: 20px; }

.stops { flex: 1; min-height: 0; margin-top: 5px; overflow: hidden; border: 2px solid var(--line); border-radius: 5px; background: #bac9d6; }
h2 { margin: 0; padding-bottom: 9px; font: 400 34px/62px var(--jp); text-align: center; }
.stop-grid { display: grid; grid-template-columns: repeat(3, 1fr); gap: 13px; padding: 0 4px; }
.stop { display: grid; grid-template-columns: 49px 1fr; grid-template-rows: 54px 40px; height: 132px; padding-top: 4px; border: 5px solid var(--line); border-radius: 5px; background: #fff; }
.stop svg { width: 38px; height: 52px; margin: 4px 0 0 2px; color: var(--line); }
.ja { font: 400 34px/46px var(--jp); }
.en { grid-column: 2; color: #858585; font-size: 36px; line-height: 34px; white-space: nowrap; }
.en.medium { font-size: 32px; line-height: 38px; }
.en.small { font-size: 25px; line-height: 42px; }
.en.tiny { font-size: 21px; line-height: 44px; }

.tabs { display: grid; flex: none; grid-template-columns: repeat(5, 1fr); height: 119px; border-top: 1px solid #b2b2b2; background: #fdfdfd; }
.tabs a { display: flex; flex-direction: column; align-items: center; padding-top: 14px; color: #a9a9a9; font-size: 24px; font-weight: 500; line-height: 32px; text-decoration: none; --cut: #fdfdfd; }
.tabs svg { width: 61px; height: 61px; margin-bottom: 9px; }
.tabs .mini { width: 41px; height: 56px; margin: 2px 0 12px; }
.tabs .current { color: #000; }
.tabs .current span { font-weight: 600; }
```
